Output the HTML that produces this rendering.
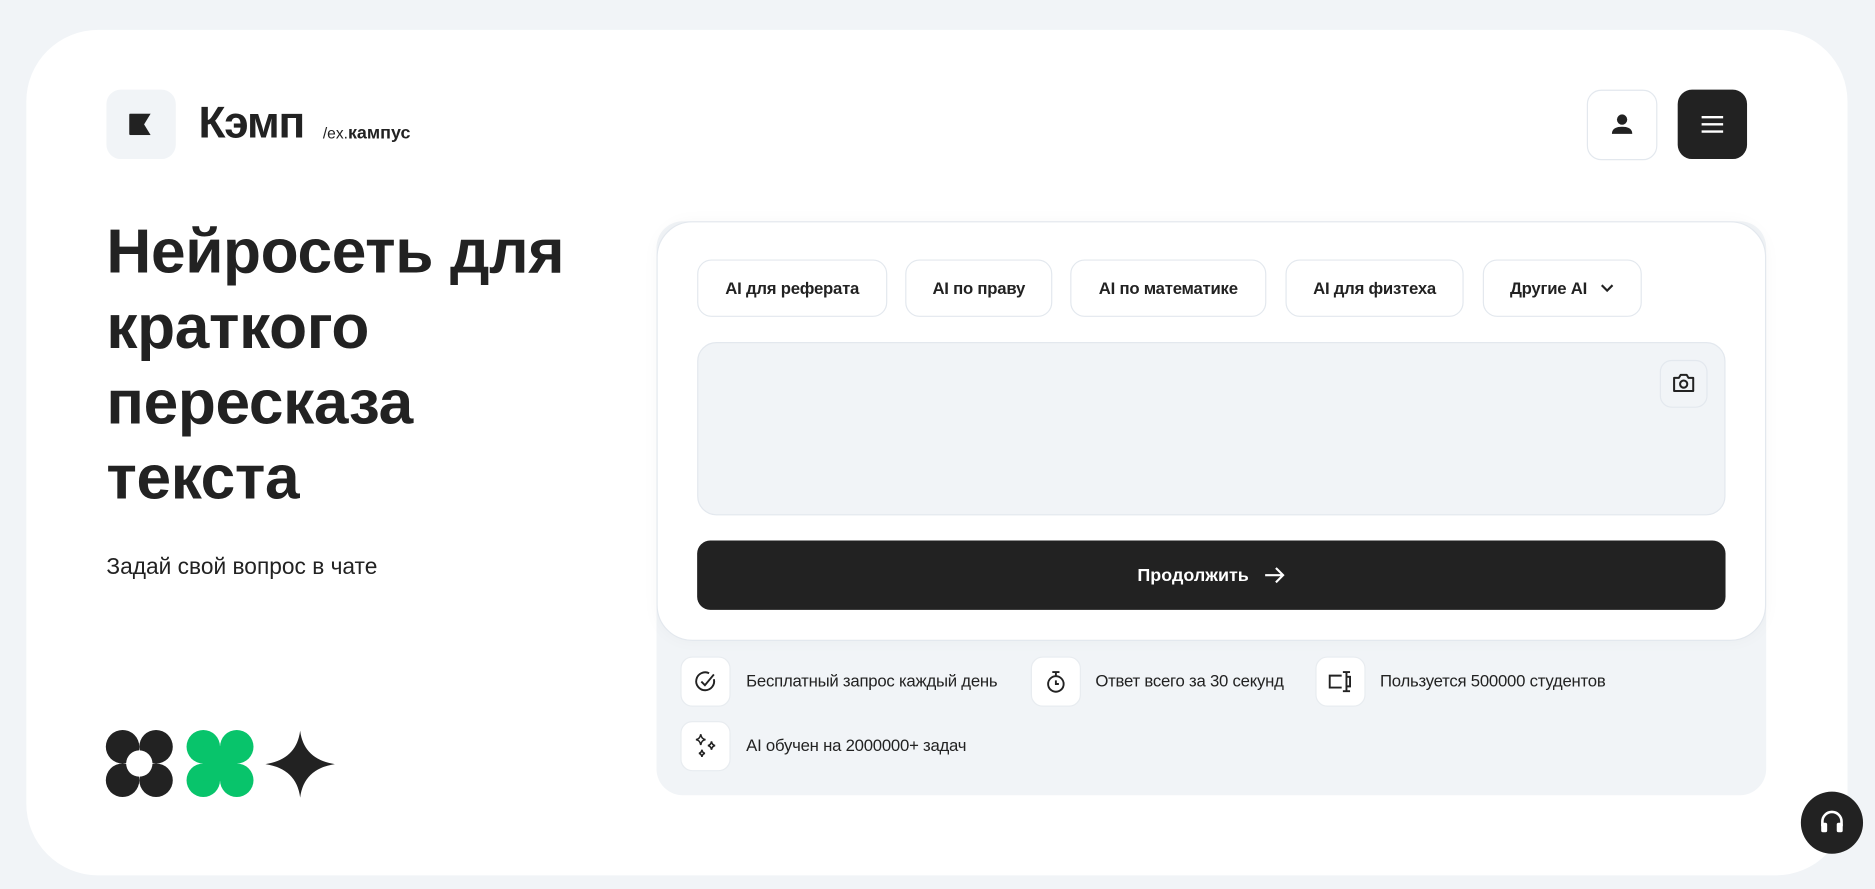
<!DOCTYPE html>
<html><head><meta charset="utf-8"><style>
*{box-sizing:border-box;margin:0;padding:0}
html,body{width:1875px;height:889px;overflow:hidden;background:#f1f4f7;font-family:"Liberation Sans","DejaVu Sans",sans-serif;color:#222}
#w{position:absolute;left:0;top:0;width:1568px;height:743px;transform:scale(1.19579);transform-origin:0 0}
.a{position:absolute}
.card{left:22px;top:25px;width:1523px;height:707px;background:#fff;border-radius:60px}
.sq{border-radius:12px}
.chip{position:absolute;top:217px;height:48px;border:1px solid #e3e8ee;border-radius:12px;font-size:14px;font-weight:bold;display:flex;align-items:center;justify-content:center;letter-spacing:-0.2px}
.fi{position:absolute;width:42px;height:42px;background:#fff;border:1px solid #e8ecf0;border-radius:10px;display:flex;align-items:center;justify-content:center}
.ft{position:absolute;font-size:14px;line-height:16px;letter-spacing:-0.2px}
h1{position:absolute;left:89px;top:180px;font-size:52px;line-height:63px;font-weight:bold;letter-spacing:-0.3px}
</style></head><body><div id="w">
<div class="a card"></div>
<div class="a sq" style="left:89px;top:75px;width:58px;height:58px;background:#f1f4f7"></div>
<svg class="a" style="left:108px;top:95px" width="20" height="18" viewBox="0 0 20 18"><path d="M0 1Q0 0 1 0H18L12.5 9L18 18H1Q0 18 0 17Z" fill="#222"/></svg>
<div class="a" style="left:166px;top:82px;font-size:37px;font-weight:bold;letter-spacing:-1px">Кэмп</div>
<div class="a" style="left:270px;top:103px;font-size:15px"><span style="font-size:13px">/ex.</span><b>кампус</b></div>
<div class="a sq" style="left:1327px;top:75px;width:59px;height:59px;border:1px solid #e3e8ee"></div>
<svg class="a" style="left:1347px;top:94px" width="19" height="20" viewBox="0 0 19 20"><circle cx="9.5" cy="6" r="4.3" fill="#222"/><path d="M1 18Q1 12 9.5 12Q18 12 18 18Z" fill="#222"/></svg>
<div class="a sq" style="left:1403px;top:75px;width:58px;height:58px;background:#222"></div>
<svg class="a" style="left:1422px;top:96px" width="20" height="16"><path d="M1 2H19M1 8H19M1 14H19" stroke="#fff" stroke-width="2"/></svg>
<h1>Нейросеть для<br>краткого<br>пересказа<br>текста</h1>
<div class="a" style="left:89px;top:464px;font-size:19px">Задай свой вопрос в чате</div>
<svg class="a" style="left:88px;top:610px" width="195" height="58" viewBox="0 0 195 58">
<g fill="#222"><circle cx="14.5" cy="14.5" r="14"/><circle cx="42.5" cy="14.5" r="14"/><circle cx="14.5" cy="42.5" r="14"/><circle cx="42.5" cy="42.5" r="14"/></g><circle cx="28.5" cy="28.5" r="11" fill="#fff"/>
<g fill="#08c46b"><circle cx="82" cy="14.5" r="14"/><circle cx="110" cy="14.5" r="14"/><circle cx="82" cy="42.5" r="14"/><circle cx="110" cy="42.5" r="14"/><rect x="82" y="14" width="28" height="29"/></g>
<path d="M163 1Q166 25 192 29Q166 33 163 57Q160 33 134 29Q160 25 163 1Z" fill="#222"/></svg>
<div class="a" style="left:549px;top:185px;width:928px;height:480px;background:#f1f4f7;border-radius:22px"></div>
<div class="a" style="left:549px;top:185px;width:928px;height:351px;background:#fff;border:1px solid #e3e8ee;border-radius:30px;box-shadow:0 0 14px rgba(0,0,0,0.03)"></div>
<div class="chip" style="left:583px;width:159px">AI для реферата</div>
<div class="chip" style="left:757px;width:123px">AI по праву</div>
<div class="chip" style="left:895px;width:164px">AI по математике</div>
<div class="chip" style="left:1075px;width:149px">AI для физтеха</div>
<div class="chip" style="left:1240px;width:133px">Другие AI&nbsp;&nbsp;&nbsp;<svg width="12" height="8"><path d="M1.5 1.5L6 6L10.5 1.5" stroke="#222" stroke-width="1.8" fill="none"/></svg></div>
<div class="a" style="left:583px;top:286px;width:860px;height:145px;background:#f1f4f7;border:1px solid #e3e8ee;border-radius:16px"></div>
<div class="a" style="left:1388px;top:301px;width:40px;height:40px;border:1px solid #e3e8ee;border-radius:10px"></div>
<svg class="a" style="left:1399px;top:312px" width="18" height="16" viewBox="0 0 18 16"><path d="M1 4H5L6.5 1.5H11.5L13 4H17V15H1Z" stroke="#222" stroke-width="1.7" fill="none" stroke-linejoin="round"/><circle cx="9" cy="9.2" r="3" stroke="#222" stroke-width="1.7" fill="none"/></svg>
<div class="a" style="left:583px;top:452px;width:860px;height:58px;background:#222;border-radius:11px;color:#fff;font-size:15px;font-weight:bold;display:flex;align-items:center;justify-content:center">Продолжить&nbsp;&nbsp;&nbsp;<svg width="18" height="16"><path d="M1 8H16M10 2L16 8L10 14" stroke="#fff" stroke-width="1.8" fill="none"/></svg></div>
<div class="fi" style="left:569px;top:549px"><svg width="20" height="20" viewBox="0 0 20 20"><path d="M17 8A7.5 7.5 0 1 1 13 3" stroke="#222" stroke-width="1.6" fill="none"/><path d="M6.5 10L9.5 13L17 4" stroke="#222" stroke-width="1.6" fill="none"/></svg></div>
<div class="ft" style="left:624px;top:561px">Бесплатный запрос каждый день</div>
<div class="fi" style="left:862px;top:549px"><svg width="18" height="20" viewBox="0 0 18 20"><circle cx="9" cy="12" r="6.5" stroke="#222" stroke-width="1.6" fill="none"/><path d="M6 2H12M9 2V5.5M9 9V12H11.5" stroke="#222" stroke-width="1.6" fill="none"/></svg></div>
<div class="ft" style="left:916px;top:561px">Ответ всего за 30 секунд</div>
<div class="fi" style="left:1100px;top:549px"><svg width="22" height="20" viewBox="0 0 22 20"><path d="M12 5H2V15H12M13 2H19M16 2V18M13 18H19M16 6H19V14H16" stroke="#222" stroke-width="1.6" fill="none"/></svg></div>
<div class="ft" style="left:1154px;top:561px">Пользуется 500000 студентов</div>
<div class="fi" style="left:569px;top:603px"><svg width="22" height="22" viewBox="0 0 22 22"><g stroke="#222" stroke-width="1.3" fill="none"><path d="M7 1Q7.5 5 11 5.5Q7.5 6 7 10Q6.5 6 3 5.5Q6.5 5 7 1Z"/><path d="M16 7Q16.4 10 19 10.5Q16.4 11 16 14Q15.6 11 13 10.5Q15.6 10 16 7Z"/><path d="M8 14Q8.3 16.5 10.5 17Q8.3 17.5 8 20Q7.7 17.5 5.5 17Q7.7 16.5 8 14Z"/></g></svg></div>
<div class="ft" style="left:624px;top:615px">AI обучен на 2000000+ задач</div>
<div class="a" style="left:1506px;top:662px;width:52px;height:52px;border-radius:50%;background:#222"></div>
<svg class="a" style="left:1520px;top:676px" width="24" height="24" viewBox="0 0 24 24"><path d="M4 15V11A8 8 0 0 1 20 11V15" stroke="#fff" stroke-width="2.2" fill="none"/><rect x="3" y="12" width="5" height="8" rx="1.5" fill="#fff"/><rect x="16" y="12" width="5" height="8" rx="1.5" fill="#fff"/></svg>
</div></body></html>
